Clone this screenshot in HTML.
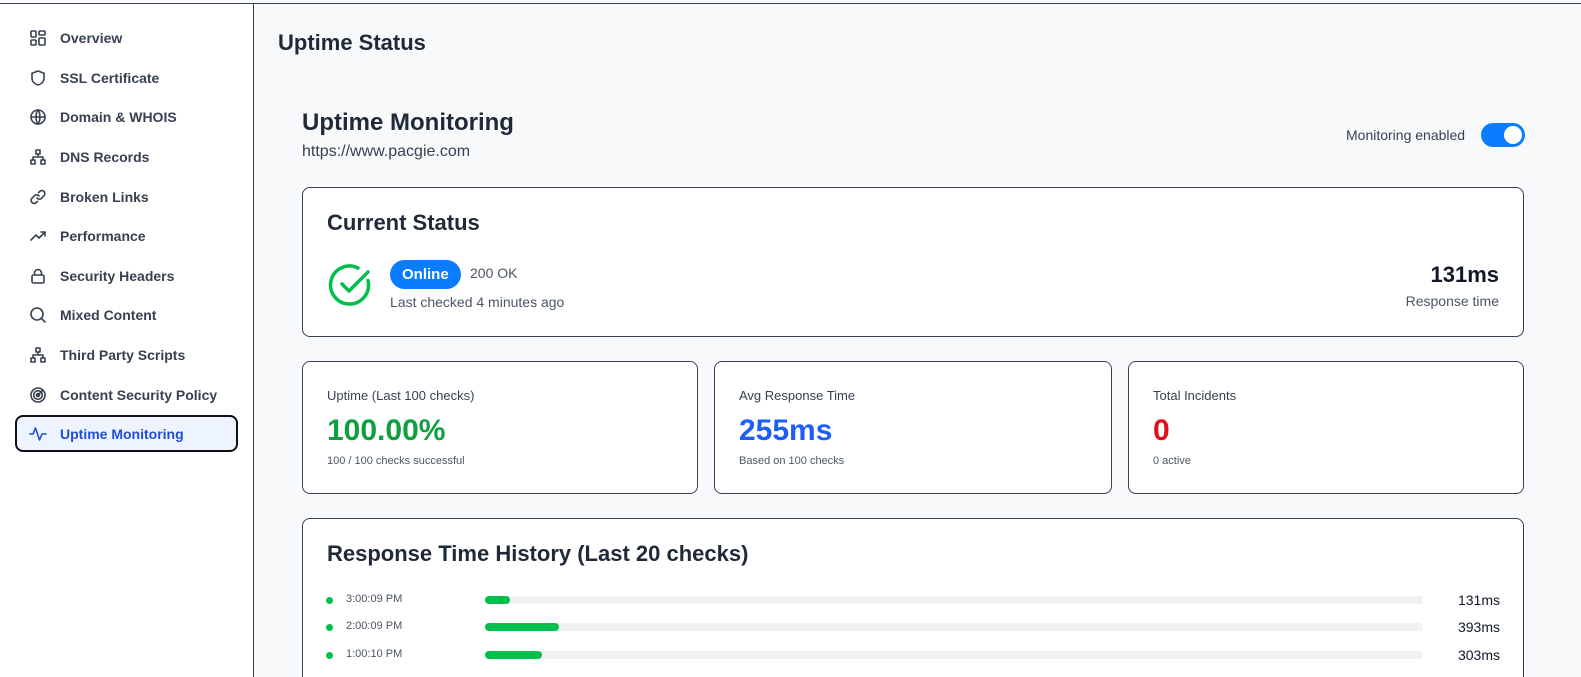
<!DOCTYPE html>
<html><head><meta charset="utf-8"><style>
*{box-sizing:border-box;margin:0;padding:0}
html{width:1581px;height:677px;overflow:hidden}
body{width:1581px;height:677px;overflow:hidden;background:#f8f9fb;font-family:"Liberation Sans",Arial,sans-serif;color:#374151;position:relative}
.abs{position:absolute}
.top{left:0;top:3px;width:1581px;height:1px;background:#374151}
.side{left:0;top:4px;width:254px;height:673px;background:#fff;border-right:1px solid #374151}
.it{position:absolute;left:15px;width:223px;height:37px;display:flex;align-items:center;padding-left:14px;font-size:14px;font-weight:bold;color:#374151}
.it svg{width:18px;height:18px;margin-right:13px;fill:none;stroke:#374151;stroke-width:1.6;stroke-linecap:round;stroke-linejoin:round}
.act{background:#eef4ff;border:2px solid #111;border-radius:8px;color:#1d4ed8;padding-left:12px}
.act svg{stroke:#1d4ed8}
.card{position:absolute;background:#fff;border:1px solid #374151;border-radius:8px}
.lbl{font-size:13px;color:#374151}
.big{font-size:30px;font-weight:bold}
.sm{font-size:11px;color:#4b5563}
.row{position:absolute;left:326px;width:1174px;height:14px}
.dot{position:absolute;left:0;top:4px;width:7px;height:7px;border-radius:50%;background:#00c04b}
.tm{position:absolute;left:20px;top:0;font-size:11px;color:#4b5563}
.tr{position:absolute;left:159px;top:3px;width:938px;height:8px;border-radius:4px;background:#f0f1f3}
.fl{height:8px;border-radius:4px;background:#00c04b}
.ms{position:absolute;right:0;top:-1px;font-size:14px;color:#111827}
</style></head><body>
<div class="abs top"></div>
<div class="abs side">
<div class="it" style="top:15px"><svg viewBox="0 0 18 18"><rect x="2" y="2" width="5" height="6" rx="1"/><rect x="10" y="2" width="6" height="4" rx="1"/><rect x="2" y="11" width="5" height="5" rx="1"/><rect x="10" y="9" width="6" height="7" rx="1"/></svg>Overview</div>
<div class="it" style="top:55px"><svg viewBox="0 0 18 18"><path d="M9 2l6 2.2v5c0 3.5-2.8 5.8-6 6.8-3.2-1-6-3.300-6-6.8v-5z"/></svg>SSL Certificate</div>
<div class="it" style="top:94px"><svg viewBox="0 0 18 18"><circle cx="9" cy="9" r="7"/><path d="M2 9h14M9 2c-2.5 2.5-2.5 11.5 0 14M9 2c2.5 2.5 2.5 11.5 0 14"/></svg>Domain &amp; WHOIS</div>
<div class="it" style="top:134px"><svg viewBox="0 0 18 18"><rect x="7" y="2" width="4" height="4"/><rect x="2" y="12" width="4" height="4"/><rect x="12" y="12" width="4" height="4"/><path d="M9 6v3M4 12V9h10v3"/></svg>DNS Records</div>
<div class="it" style="top:174px"><svg viewBox="0 0 18 18"><path d="M8 10a3 3 0 004.5.3l2.5-2.5a3 3 0 00-4.3-4.3L9.5 4.7M10 8a3 3 0 00-4.5-.3L3 10.2a3 3 0 004.3 4.3l1.2-1.2"/></svg>Broken Links</div>
<div class="it" style="top:213px"><svg viewBox="0 0 18 18"><path d="M2 13l5-5 3 3 6-6M12 5h4v4"/></svg>Performance</div>
<div class="it" style="top:253px"><svg viewBox="0 0 18 18"><rect x="3" y="8" width="12" height="8" rx="1.5"/><path d="M5.5 8V6a3.5 3.5 0 017 0v2"/></svg>Security Headers</div>
<div class="it" style="top:292px"><svg viewBox="0 0 18 18"><circle cx="8" cy="8" r="6"/><path d="M12.5 12.5l3.5 3.5"/></svg>Mixed Content</div>
<div class="it" style="top:332px"><svg viewBox="0 0 18 18"><rect x="7" y="2" width="4" height="4"/><rect x="2" y="12" width="4" height="4"/><rect x="12" y="12" width="4" height="4"/><path d="M9 6v3M4 12V9h10v3"/></svg>Third Party Scripts</div>
<div class="it" style="top:372px"><svg viewBox="0 0 18 18"><circle cx="9" cy="9" r="7"/><circle cx="9" cy="9" r="4.3"/><circle cx="9" cy="9" r="1.5"/><path d="M9 9l5-5"/></svg>Content Security Policy</div>
<div class="it act" style="top:411px"><svg viewBox="0 0 18 18"><path d="M1 9h3l2.5-6 4 12 2.5-6h4"/></svg>Uptime Monitoring</div>
</div>

<div class="abs" style="left:278px;top:30px;font-size:22px;font-weight:bold;color:#1f2937">Uptime Status</div>
<div class="abs" style="left:302px;top:109px;font-size:24px;font-weight:bold;color:#1f2937">Uptime Monitoring</div>
<div class="abs" style="left:302px;top:143px;font-size:16px;color:#374151">https://www.pacgie.com</div>
<div class="abs" style="left:1346px;top:127px;font-size:14px;color:#374151">Monitoring enabled</div>
<div class="abs" style="left:1481px;top:123px;width:44px;height:24px;border-radius:12px;background:#0a7cff"><div style="position:absolute;right:3px;top:3px;width:18px;height:18px;border-radius:50%;background:#fff"></div></div>

<div class="card" style="left:302px;top:187px;width:1222px;height:150px">
<div class="abs" style="left:24px;top:22px;font-size:22px;font-weight:bold;color:#1f2937">Current Status</div>
<svg class="abs" style="left:24px;top:74px" width="46" height="46" viewBox="0 0 46 46" fill="none" stroke="#00c04b" stroke-width="3.5" stroke-linecap="round" stroke-linejoin="round"><path d="M41 18.5A19 19 0 1 1 31 6"/><path d="M15 22l7 7 19-19"/></svg>
<div class="abs" style="left:87px;top:72px;height:29px;padding:0 12px;border-radius:15px;background:#0a7cff;color:#fff;font-size:15px;font-weight:bold;line-height:29px">Online</div>
<div class="abs" style="left:167px;top:77px;font-size:14px;color:#4b5563">200 OK</div>
<div class="abs" style="left:87px;top:106px;font-size:14px;color:#4b5563">Last checked 4 minutes ago</div>
<div class="abs" style="right:24px;top:74px;font-size:22px;font-weight:bold;color:#111827">131ms</div>
<div class="abs" style="right:24px;top:105px;font-size:14px;color:#4b5563">Response time</div>
</div>

<div class="card" style="left:302px;top:361px;width:396px;height:133px">
<div class="abs lbl" style="left:24px;top:26px">Uptime (Last 100 checks)</div>
<div class="abs big" style="left:24px;top:52px;color:#0ea03f">100.00%</div>
<div class="abs sm" style="left:24px;top:93px">100 / 100 checks successful</div>
</div>
<div class="card" style="left:714px;top:361px;width:398px;height:133px">
<div class="abs lbl" style="left:24px;top:26px">Avg Response Time</div>
<div class="abs big" style="left:24px;top:52px;color:#1d5ff5">255ms</div>
<div class="abs sm" style="left:24px;top:93px">Based on 100 checks</div>
</div>
<div class="card" style="left:1128px;top:361px;width:396px;height:133px">
<div class="abs lbl" style="left:24px;top:26px">Total Incidents</div>
<div class="abs big" style="left:24px;top:52px;color:#e0101a">0</div>
<div class="abs sm" style="left:24px;top:93px">0 active</div>
</div>

<div class="card" style="left:302px;top:518px;width:1222px;height:170px;border-bottom:none;border-radius:8px 8px 0 0">
<div class="abs" style="left:24px;top:22px;font-size:22px;font-weight:bold;color:#1f2937">Response Time History (Last 20 checks)</div>
</div>
<div class="row" style="top:593px"><div class="dot"></div><div class="tm">3:00:09 PM</div><div class="tr"><div class="fl" style="width:25px"></div></div><div class="ms">131ms</div></div>
<div class="row" style="top:620px"><div class="dot"></div><div class="tm">2:00:09 PM</div><div class="tr"><div class="fl" style="width:74px"></div></div><div class="ms">393ms</div></div>
<div class="row" style="top:648px"><div class="dot"></div><div class="tm">1:00:10 PM</div><div class="tr"><div class="fl" style="width:57px"></div></div><div class="ms">303ms</div></div>
</body></html>
